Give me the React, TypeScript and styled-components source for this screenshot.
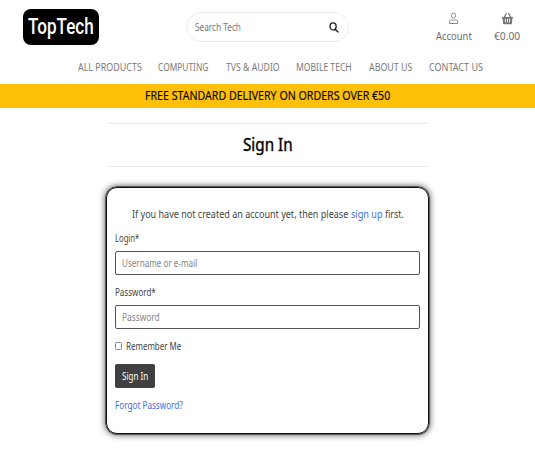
import React, { useLayoutEffect, useRef, useState } from 'react';
import styled, { createGlobalStyle } from 'styled-components';
import { FaShoppingBasket } from 'react-icons/fa';

const GlobalStyle = createGlobalStyle`
  *, *::before, *::after { box-sizing: border-box; }
  body {
    margin: 0;
    background: #fff;
    color: #444;
    font-family: "Noto Sans", "Open Sans", sans-serif;
    font-size: 10px;
    overflow: hidden;
  }
`;

const FitBox = styled.span<{ $width: number }>`
  display: block;
  flex: none;
  width: ${(p) => p.$width}px;
  white-space: nowrap;
`;

const FitInner = styled.span`
  display: inline-block;
  transform-origin: 0 50%;
`;

/* Condenses a single line of text to the given width. */
function Fit({ width, children }: { width: number; children: React.ReactNode }) {
  const ref = useRef<HTMLSpanElement>(null);
  const [scale, setScale] = useState(1);
  useLayoutEffect(() => {
    if (ref.current) setScale(width / ref.current.offsetWidth);
  }, [width]);
  return (
    <FitBox $width={width}>
      <FitInner ref={ref} style={{ transform: `scaleX(${scale})` }}>
        {children}
      </FitInner>
    </FitBox>
  );
}

const Page = styled.div`
  width: 535px;
  height: 450px;
  overflow: hidden;
`;

const TopBar = styled.header`
  display: flex;
  align-items: flex-start;
  height: 54px;
  padding: 9px 15px 0 23px;
`;

const Logo = styled.a`
  display: flex;
  align-items: center;
  justify-content: center;
  width: 76px;
  height: 36px;
  border-radius: 8px;
  background: #000;
  color: #fff;
  font: 500 21.5px/36px Roboto, sans-serif;
`;

const SearchBox = styled.div`
  display: flex;
  align-items: center;
  justify-content: space-between;
  width: 163px;
  height: 30px;
  margin: 3px 0 0 87px;
  padding: 0 9px 0 8px;
  border: 1px solid #ececec;
  border-radius: 15px;
  color: #777;
  font-size: 10.4px;
`;

const HeaderLinks = styled.div`
  display: flex;
  gap: 22.5px;
  margin: 3px 0 0 auto;
`;

const HeaderLink = styled.a`
  display: flex;
  flex-direction: column;
  align-items: center;
  gap: 3px;
  color: #6c6c6c;
  font-size: 11px;
  line-height: 15px;
  svg { height: 13px; display: block; }
`;

const Nav = styled.nav`
  display: flex;
  gap: 16.8px;
  height: 30px;
  padding: 6px 0 0 78px;
  color: #7a7a7a;
  font-size: 10.4px;
  line-height: 15px;
`;

const Banner = styled.div`
  display: flex;
  justify-content: center;
  height: 24px;
  background: #ffc107;
  color: #0d0a00;
  font-size: 12px;
  -webkit-text-stroke: 0.2px #0d0a00;
  line-height: 24px;
`;

const Main = styled.main`
  width: 322px;
  margin: 15px 0 0 107px;
`;

const Title = styled.h1`
  display: flex;
  justify-content: center;
  height: 44px;
  margin: 0 1px 20px 1px;
  border-top: 1px solid #e9e9e9;
  border-bottom: 1px solid #e9e9e9;
  color: #000;
  font-size: 18px;
  font-weight: 400;
  -webkit-text-stroke: 0.4px #000;
  line-height: 41px;
`;

const Card = styled.form`
  display: flex;
  flex-direction: column;
  align-items: flex-start;
  width: 323px;
  height: 247px;
  margin-left: -1px;
  padding: 17px 8px 0;
  border: 1px solid #111;
  border-radius: 11px;
  box-shadow: 0 0 0 0.5px #111, 0 0 6px 1px rgba(0, 0, 0, 0.65);
`;

const Intro = styled.p`
  display: flex;
  align-self: center;
  gap: 2.5px;
  margin: 0 0 8px;
  font-size: 11px;
  line-height: 18px;
`;

const Link = styled.a`
  color: #3d6ee8;
`;

const Label = styled.label`
  font-size: 10px;
  line-height: 14px;
  margin-bottom: 6px;
`;

const Input = styled.div`
  display: flex;
  align-items: center;
  width: 305px;
  height: 24px;
  margin-bottom: 10px;
  padding-left: 6px;
  border: 1px solid #555;
  border-radius: 2px;
  color: #858585;
  font-size: 10.2px;
  line-height: 20px;
`;

const Remember = styled.div`
  display: flex;
  align-items: center;
  gap: 3.5px;
  height: 14px;
  margin-bottom: 11px;
  font-size: 10.2px;
`;

const Check = styled.span`
  width: 7px;
  height: 8px;
  border: 1px solid #858585;
  border-radius: 1.5px;
`;

const Button = styled.button`
  display: flex;
  align-items: center;
  justify-content: center;
  width: 40px;
  height: 24px;
  margin: 0 0 10px;
  padding: 0;
  border: 0;
  border-radius: 2px;
  background: #404040;
  color: #fff;
  font: 10.3px "Noto Sans", sans-serif;
`;

const Forgot = styled(Link)`
  font-size: 10.2px;
  line-height: 14px;
`;

const navItems: [string, number][] = [
  ['ALL PRODUCTS', 63.5],
  ['COMPUTING', 50.8],
  ['TVS & AUDIO', 53.5],
  ['MOBILE TECH', 56],
  ['ABOUT US', 43.5],
  ['CONTACT US', 53.8],
];

function SearchIcon() {
  return (
    <svg width="10" height="11" viewBox="0 0 10 11" fill="none" stroke="#1d1d1d" strokeWidth="1.4">
      <ellipse cx="4.1" cy="4.4" rx="3" ry="3.5" />
      <path d="M6.2 7.2 9 10.1" strokeLinecap="round" />
    </svg>
  );
}

function UserIcon() {
  return (
    <svg width="9" height="13" viewBox="0 0 9 13" fill="none" stroke="#7d7d7d" strokeWidth="0.9">
      <ellipse cx="4.5" cy="3.6" rx="2.1" ry="2.5" />
      <path d="M.5 11.5V10c0-1.500.9-2.200 2-2.200.7 0 1 .4 2 .4s1.300-.4 2-.4c1.100 0 2 .7 2 2.200v1.500Z" />
    </svg>
  );
}

export default function App() {
  return (
    <Page>
      <GlobalStyle />
      <TopBar>
        <Logo><Fit width={66}>TopTech</Fit></Logo>
        <SearchBox>
          <Fit width={46}>Search Tech</Fit>
          <SearchIcon />
        </SearchBox>
        <HeaderLinks>
          <HeaderLink><UserIcon /><Fit width={36}>Account</Fit></HeaderLink>
          <HeaderLink><FaShoppingBasket size={11} preserveAspectRatio="none" color="#747474" /><Fit width={26}>€0.00</Fit></HeaderLink>
        </HeaderLinks>
      </TopBar>
      <Nav>
        {navItems.map(([name, width]) => <Fit key={name} width={width}>{name}</Fit>)}
      </Nav>
      <Banner><Fit width={245}>FREE STANDARD DELIVERY ON ORDERS OVER €50</Fit></Banner>
      <Main>
        <Title><Fit width={50}>Sign In</Fit></Title>
        <Card>
          <Intro>
            <Fit width={216}>If you have not created an account yet, then please</Fit>
            <Link><Fit width={31.5}>sign up</Fit></Link>
            <Fit width={18.5}>first.</Fit>
          </Intro>
          <Label><Fit width={24.5}>Login*</Fit></Label>
          <Input><Fit width={75.5}>Username or e-mail</Fit></Input>
          <Label><Fit width={41}>Password*</Fit></Label>
          <Input><Fit width={37.5}>Password</Fit></Input>
          <Remember><Check /><Fit width={55.5}>Remember Me</Fit></Remember>
          <Button type="button"><Fit width={26.5}>Sign In</Fit></Button>
          <Forgot><Fit width={68}>Forgot Password?</Fit></Forgot>
        </Card>
      </Main>
    </Page>
  );
}
